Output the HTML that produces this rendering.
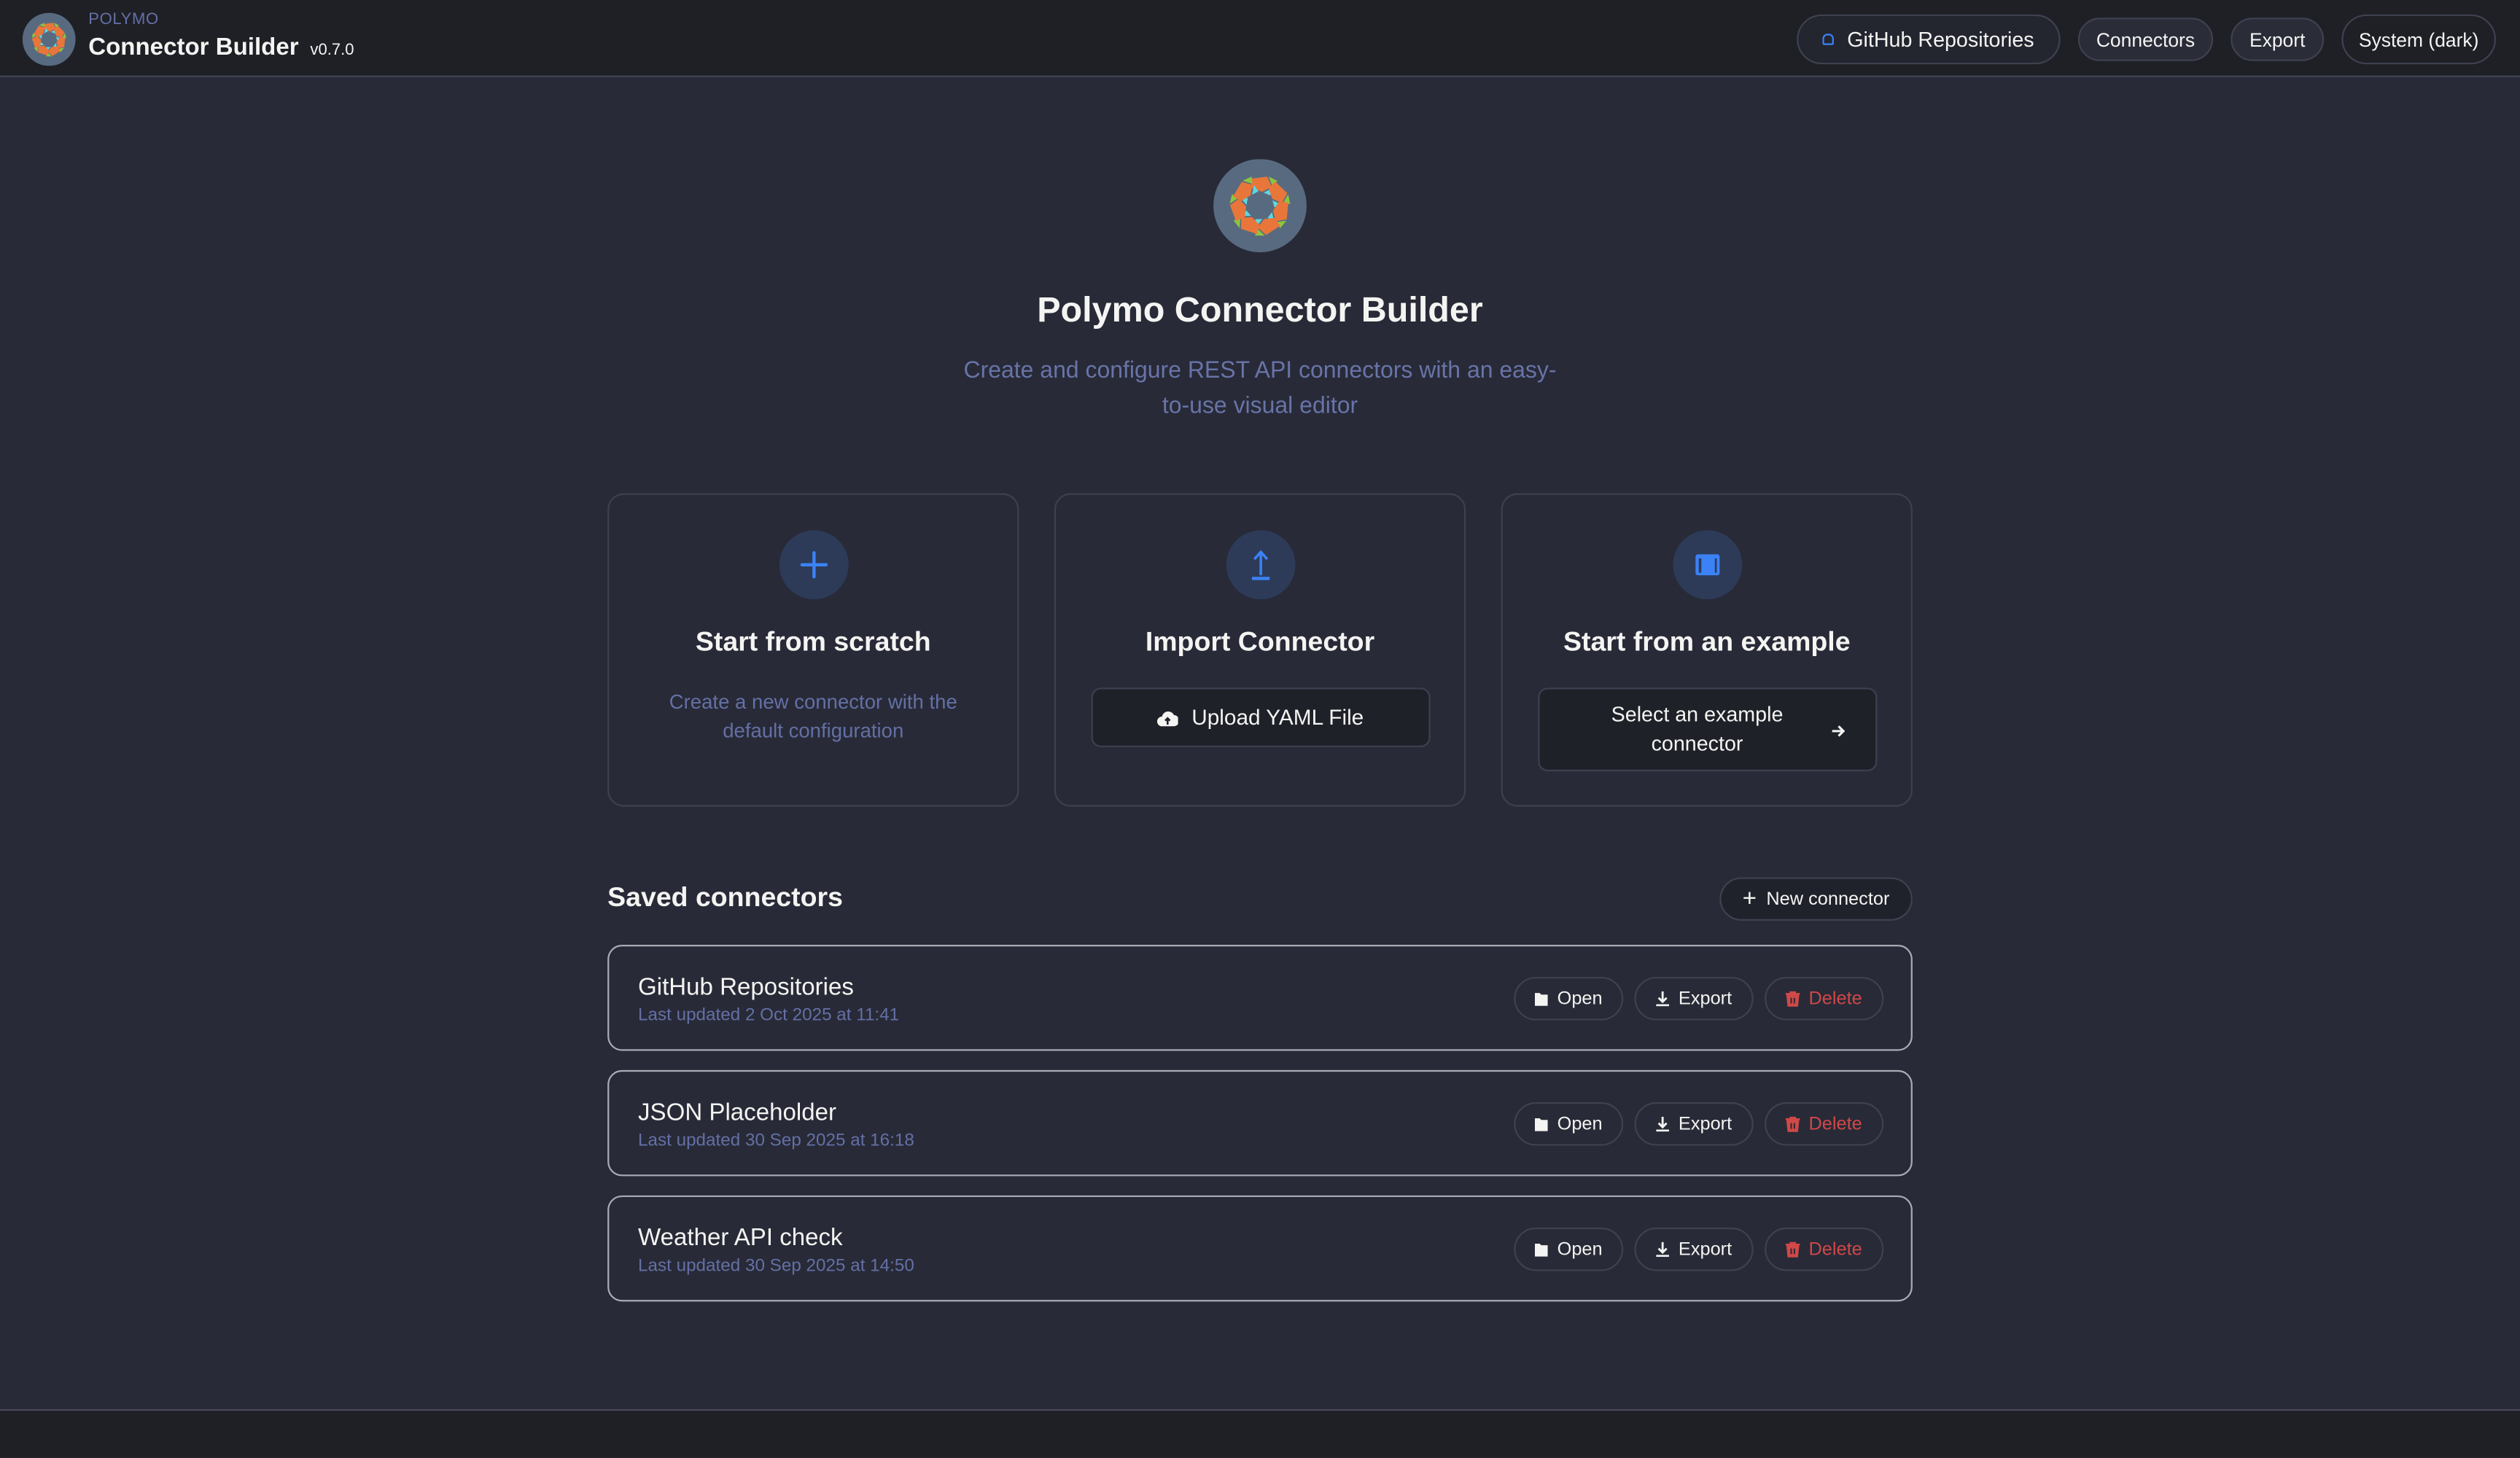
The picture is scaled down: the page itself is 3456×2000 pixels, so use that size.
<!DOCTYPE html>
<html><head><meta charset="utf-8">
<style>
*{box-sizing:border-box;margin:0;padding:0}
html,body{width:3456px;height:2000px;overflow:hidden;background:#282a37}
body{font-family:"Liberation Sans",sans-serif;color:#f4f4f2}
#s{position:absolute;left:0;top:0;width:1568px;height:907px;transform:scale(2.2041);transform-origin:0 0;background:#282a37}
.a{position:absolute}
.hdr{left:0;top:0;width:1568px;height:48px;background:#1f2026;border-bottom:1px solid #444656}
.pill{position:absolute;border:1px solid #3e4150;border-radius:20px;display:flex;align-items:center;justify-content:center;font-size:12px;color:#f4f4f2}
.card{position:absolute;top:307px;width:256px;height:195px;border:1px solid #3d404f;border-radius:10px;background:#282a37}
.ic{position:absolute;left:106px;top:22px;width:43px;height:43px;border-radius:50%;background:#2d3b59}
.ct{position:absolute;left:0;width:100%;top:82px;text-align:center;font-size:17px;font-weight:bold}
.btn{position:absolute;left:22px;width:211px;background:#1f2129;border:1px solid #3d404f;border-radius:6px;display:flex;align-items:center;justify-content:center;font-size:13.5px}
.row{position:absolute;left:378px;width:812px;height:66px;border:1px solid #a9abb5;border-radius:9px}
.nm{position:absolute;left:18px;top:17px;font-size:15px}
.dt{position:absolute;left:18px;top:37px;font-size:11px;color:#6470a5}
.sb{position:absolute;top:19px;height:27px;border:1px solid #3e4150;border-radius:14px;display:flex;align-items:center;justify-content:center;font-size:11.5px;gap:5px}
</style></head><body>
<svg width="0" height="0" style="position:absolute"><defs>
<g id="seg">
<polygon points="-13,-37 10,-40 16,-26 3,-19 -11,-24" fill="#e8763a"/>
<polygon points="12,-40 24,-34 17,-27" fill="#8cc63f"/>
<polygon points="5,-18 17,-24 14,-14" fill="#5dd8e0"/>
</g>
<g id="logo">
<circle r="50" fill="#586a80"/>
<g transform="scale(0.78)">
<use href="#seg"/><use href="#seg" transform="rotate(51.43)"/><use href="#seg" transform="rotate(102.86)"/><use href="#seg" transform="rotate(154.29)"/><use href="#seg" transform="rotate(205.71)"/><use href="#seg" transform="rotate(257.14)"/><use href="#seg" transform="rotate(308.57)"/>
</g>
</g>
<g id="fo"><path d="M0 1h3l1 1h4v7H0z" fill="#f4f4f2"/></g>
<g id="ex"><path d="M4.5 0v6M2 4l2.5 2.5L7 4" stroke="#f4f4f2" stroke-width="1.3" fill="none"/><rect x="0.5" y="8" width="8" height="1.2" fill="#f4f4f2"/></g>
<g id="tr"><path d="M0 1.5h9M3 1.5V0h3v1.5M1 2.5h7l-.7 6.5H1.7z" stroke="#d04848" stroke-width="1" fill="#d04848"/><path d="M3.5 4v3.5M5.5 4v3.5" stroke="#282a37" stroke-width=".9"/></g>
</defs></svg>
<div id="s">
<div class="a hdr">
<svg class="a" style="left:14px;top:8px" width="33" height="33" viewBox="-50 -50 100 100"><use href="#logo"/></svg>
<div class="a" style="left:55px;top:7px;font-size:10px;color:#6470a5;letter-spacing:.3px">POLYMO</div>
<div class="a" style="left:55px;top:21px;font-size:15px;font-weight:bold;white-space:nowrap">Connector Builder <span style="font-size:10px;font-weight:normal;margin-left:3px">v0.7.0</span></div>
<div class="pill" style="left:1118px;top:9px;width:164px;height:31px;font-size:13px;gap:8px;background:#23252f"><span style="width:7px;height:7px;border:1.5px solid #3b82f6;border-radius:3px 3px 1px 1px"></span>GitHub Repositories</div>
<div class="pill" style="left:1293px;top:11px;width:84px;height:27px;background:#2a2c38">Connectors</div>
<div class="pill" style="left:1388px;top:11px;width:58px;height:27px;background:#2a2c38">Export</div>
<div class="pill" style="left:1457px;top:9px;width:96px;height:31px">System (dark)</div>
</div>

<svg class="a" style="left:755px;top:99px" width="58" height="58" viewBox="-50 -50 100 100"><use href="#logo"/></svg>
<div class="a" style="left:0;width:1568px;top:180px;text-align:center;font-size:22px;font-weight:bold">Polymo Connector Builder</div>
<div class="a" style="left:594px;width:380px;top:220px;text-align:center;font-size:14.5px;line-height:22px;color:#6874a8">Create and configure REST API connectors with an easy-to-use visual editor</div>

<div class="card" style="left:378px">
<div class="ic"><svg width="43" height="43" viewBox="0 0 43 43"><path d="M21.5 14v15M14 21.5h15" stroke="#3b82f6" stroke-width="2" stroke-linecap="round"/></svg></div>
<div class="ct">Start from scratch</div>
<div class="a" style="left:20px;right:20px;top:120px;text-align:center;font-size:12.5px;line-height:18px;color:#6470a5">Create a new connector with the default configuration</div>
</div>
<div class="card" style="left:656px">
<div class="ic"><svg width="43" height="43" viewBox="0 0 43 43"><path d="M21.5 28V14M17.5 18l4-4.5 4 4.5" stroke="#3b82f6" stroke-width="1.6" fill="none"/><rect x="16" y="29" width="11" height="2" fill="#3b82f6"/></svg></div>
<div class="ct">Import Connector</div>
<div class="btn" style="top:120px;height:37px;gap:8px"><svg width="13" height="12" viewBox="0 0 13 12"><path d="M3 11a3 3 0 0 1 0-6 4 4 0 0 1 7.5-1A3.5 3.5 0 0 1 10 11z" fill="#f4f4f2"/><path d="M6.5 10V6M5 7.5l1.5-1.5 1.5 1.5" stroke="#1f2129" stroke-width="1.2" fill="none"/></svg>Upload YAML File</div>
</div>
<div class="card" style="left:934px">
<div class="ic"><svg width="43" height="43" viewBox="0 0 43 43"><rect x="14" y="15" width="15" height="13" rx="1.5" fill="#3b82f6"/><rect x="16" y="17.5" width="1.6" height="9" fill="#2d3b59"/><rect x="26" y="17.5" width="1.2" height="9" fill="#2d3b59"/></svg></div>
<div class="ct">Start from an example</div>
<div class="btn" style="top:120px;height:52px;font-size:13px;line-height:18px;justify-content:flex-start"><div style="width:140px;margin-left:28px;text-align:center">Select an example connector</div><svg class="a" style="right:18px;top:21px" width="10" height="10" viewBox="0 0 10 10"><path d="M1 5h7M5 2l3 3-3 3" stroke="#f4f4f2" stroke-width="1.4" fill="none"/></svg></div>
</div>

<div class="a" style="left:378px;top:549px;font-size:17px;font-weight:bold">Saved connectors</div>
<div class="pill" style="left:1070px;top:546px;width:120px;height:27px;background:#20222b;font-size:11.5px;gap:6px"><span style="font-size:15px;line-height:10px">+</span>New connector</div>

<div class="row" style="top:588px"><div class="nm">GitHub Repositories</div><div class="dt">Last updated 2 Oct 2025 at 11:41</div>
<div class="sb" style="left:563px;width:68px"><svg width="9" height="10"><use href="#fo"/></svg>Open</div><div class="sb" style="left:638px;width:74px"><svg width="9" height="10"><use href="#ex"/></svg>Export</div><div class="sb" style="left:719px;width:74px;color:#d04848"><svg width="9" height="10"><use href="#tr"/></svg>Delete</div></div>
<div class="row" style="top:666px"><div class="nm">JSON Placeholder</div><div class="dt">Last updated 30 Sep 2025 at 16:18</div>
<div class="sb" style="left:563px;width:68px"><svg width="9" height="10"><use href="#fo"/></svg>Open</div><div class="sb" style="left:638px;width:74px"><svg width="9" height="10"><use href="#ex"/></svg>Export</div><div class="sb" style="left:719px;width:74px;color:#d04848"><svg width="9" height="10"><use href="#tr"/></svg>Delete</div></div>
<div class="row" style="top:744px"><div class="nm">Weather API check</div><div class="dt">Last updated 30 Sep 2025 at 14:50</div>
<div class="sb" style="left:563px;width:68px"><svg width="9" height="10"><use href="#fo"/></svg>Open</div><div class="sb" style="left:638px;width:74px"><svg width="9" height="10"><use href="#ex"/></svg>Export</div><div class="sb" style="left:719px;width:74px;color:#d04848"><svg width="9" height="10"><use href="#tr"/></svg>Delete</div></div>

<div class="a" style="left:0;top:877px;width:1568px;height:30px;background:#1f2026;border-top:1px solid #4a4a5c"></div>
</div>
</body></html>
